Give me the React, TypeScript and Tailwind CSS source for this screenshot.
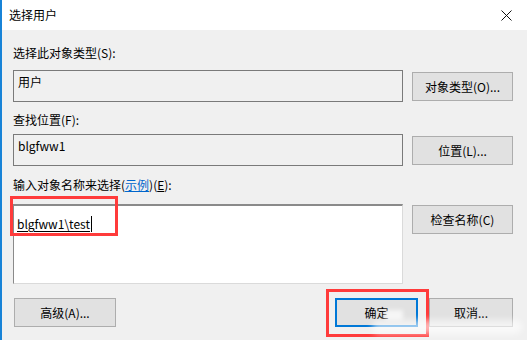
import React from "react";

const font = { fontFamily: '"Noto Sans CJK SC", "Noto Sans", sans-serif' };

function Btn({ children, className = "" }: { children: React.ReactNode; className?: string }) {
  return (
    <div
      className={`h-[29px] flex items-center justify-center bg-[#e1e1e1] border border-[#adadad] text-[12px] text-black ${className}`}
    >
      {children}
    </div>
  );
}

export default function App() {
  return (
    <div
      className="relative w-[527px] h-[340px] overflow-hidden bg-[#f0f0f0] border-l-2 border-[#1883d7] flex flex-col text-black"
      style={font}
    >
      {/* title bar */}
      <div className="h-[30px] bg-white flex items-center justify-between pl-[7px] pr-[14px] shrink-0">
        <span className="text-[12px] leading-[16px]">选择用户</span>
        <svg width="11" height="11" viewBox="0 0 11 11" className="mr-[1px]">
          <path d="M0.5 0.5 L10.5 10.5 M10.5 0.5 L0.5 10.5" stroke="#111" strokeWidth="1" />
        </svg>
      </div>

      <div className="flex flex-col pl-[11px] pr-[14px]">
        <div className="mt-[15px] h-[16px] leading-[16px] text-[12px]">选择此对象类型(S):</div>
        <div className="mt-[9px] flex items-start gap-[9px]">
          <div className="w-[390px] h-[32px] border border-[#7a7a7a] bg-[#f0f0f0] pl-[4px] pt-[2px] text-[12px] leading-[18px]">
            用户
          </div>
          <Btn className="w-[101px] mt-[2px]">对象类型(O)...</Btn>
        </div>

        <div className="mt-[10px] h-[16px] leading-[16px] text-[12px]">查找位置(F):</div>
        <div className="mt-[6px] flex items-start gap-[9px]">
          <div className="w-[390px] h-[32px] border border-[#7a7a7a] bg-[#f0f0f0] pl-[4px] pt-[2px] text-[12px] leading-[18px]">
            blgfww1
          </div>
          <Btn className="w-[101px] mt-[2px]">位置(L)...</Btn>
        </div>

        <div className="mt-[11px] h-[16px] leading-[16px] text-[12px]">
          输入对象名称来选择(<span className="text-[#0066cc] underline">示例</span>)(<span className="underline">E</span>):
        </div>
        <div className="mt-[11px] flex items-start gap-[9px]">
          <div className="w-[390px] h-[80px] bg-white border-t-2 border-l border-t-[#8a8a8a] border-l-[#8a8a8a] border-r border-b border-r-[#dadada] border-b-[#dadada] pl-[3px] pt-[9px]">
            <div className="flex items-center h-[18px]">
              <span className="text-[12px] leading-[18px] underline underline-offset-2">blgfww1\test</span>
              <span className="w-[1px] h-[16px] bg-black ml-[1px]" />
            </div>
          </div>
          <Btn className="w-[101px] mt-[1px]">检查名称(C)</Btn>
        </div>

        <div className="mt-[14px] flex items-start">
          <Btn className="w-[102px] ml-[1px]">高级(A)...</Btn>
          <div className="flex-1" />
          <div className="w-[83px] h-[29px] flex items-center justify-center bg-[#e1e1e1] border-2 border-[#0078d7] text-[12px]">
            确定
          </div>
          <Btn className="w-[84px] ml-[11px]">取消...</Btn>
        </div>
      </div>

      {/* red annotation boxes */}
      <div className="absolute left-[8px] top-[196px] w-[108px] h-[40px] border-[3px] border-[#ff3b3b]" />
      <div className="absolute left-[324px] top-[289px] w-[103px] h-[48px] border-[3px] border-[#ff3b3b]" />

      {/* watermark smudges */}
      <div className="absolute left-[370px] top-[320px] w-[150px] h-[14px] bg-white/60 blur-[3px] rounded-full" />
      <div className="absolute left-[383px] top-[310px] w-[18px] h-[10px] bg-white/70 blur-[2px]" />
    </div>
  );
}
